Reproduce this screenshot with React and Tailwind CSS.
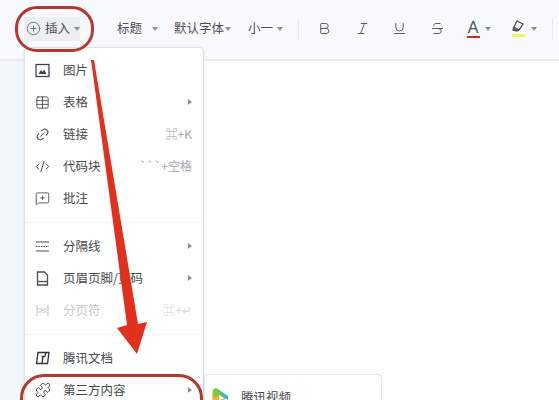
import React from "react";
import {
  Bold,
  CodeXml,
  Italic,
  Link2,
  MessageSquarePlus,
  PlusCircle,
  Puzzle,
  Strikethrough,
  Table,
  Underline,
} from "lucide-react";

const Caret = ({ className = "" }) => (
  <span className={`shrink-0 w-0 h-0 border-x-[3px] border-x-transparent border-t-[4px] border-t-[#8b9097] ${className}`} />
);

const Arrow = () => (
  <span className="w-0 h-0 border-y-[3px] border-y-transparent border-l-[4px] border-l-[#8b9097]" />
);

const PictureIcon = () => (
  <svg width="15" height="15" viewBox="0 0 15 15" fill="none" stroke="#3f4349" strokeWidth="1.3">
    <rect x="1" y="1.5" width="13" height="12" />
    <path d="M3.5 11l2.5-4 1.5 2 1.5-2.5 2.5 4.5z" fill="#3f4349" stroke="none" />
  </svg>
);

const PageIcon = () => (
  <svg width="15" height="15" viewBox="0 0 15 15" fill="none" stroke="#4b4f55" strokeWidth="1.3">
    <path d="M2.5 1h7l3 3v10h-10z" />
    <path d="M2.5 10.5h10" />
  </svg>
);

const DividerIcon = () => (
  <svg width="15" height="15" viewBox="0 0 15 15" fill="none" stroke="#4b4f55" strokeWidth="1.2">
    <path d="M1 3h13M1 12h13" />
    <path d="M1 7.5h13" strokeDasharray="1.5 1" />
  </svg>
);

const BreakIcon = () => (
  <svg width="15" height="15" viewBox="0 0 15 15" fill="none" stroke="#c9ccd0" strokeWidth="1.2">
    <path d="M2 2v4h11V2M2 13V9h11v4M1 7.5h2M6 7.5h3M12 7.5h2" />
  </svg>
);

const DocsIcon = () => (
  <svg width="16" height="16" viewBox="0 0 16 16" fill="none" stroke="#33373c" strokeWidth="1.4">
    <path d="M3 2.5h11l-1.5 11H1.5z" />
    <path d="M6.5 6.5h4M8 6.5L7 13.5M11 2.5l-1 3" />
  </svg>
);

const VideoLogo = () => (
  <svg width="18" height="20" viewBox="0 0 18 20">
    <path d="M2 3 L16 11 L3 19 Q0 11 2 3z" fill="#f7b52c" />
    <path d="M5 1 L17 9 L17 13 L8 7z" fill="#2bb5e8" />
    <path d="M2 3 Q3 1 5 1 L12 6 L3 11z" fill="#79c93c" />
    <path d="M8 8 L13 11 L8 14z" fill="#ffffff" />
  </svg>
);

const rows = [
  [
    { icon: <PictureIcon />, label: "图片" },
    { icon: <Table size={15} strokeWidth={1.4} />, label: "表格", more: true },
    { icon: <Link2 size={15} strokeWidth={1.6} className="-rotate-45" />, label: "链接", keys: "⌘+K" },
    { icon: <CodeXml size={15} strokeWidth={1.6} />, label: "代码块", keys: "```+空格" },
    { icon: <MessageSquarePlus size={15} strokeWidth={1.4} />, label: "批注" },
  ],
  [
    { icon: <DividerIcon />, label: "分隔线", more: true },
    { icon: <PageIcon />, label: "页眉页脚/页码", more: true },
    { icon: <BreakIcon />, label: "分页符", keys: "⌘+↵", off: true },
  ],
  [
    { icon: <DocsIcon />, label: "腾讯文档" },
    { icon: <Puzzle size={16} strokeWidth={1.5} />, label: "第三方内容", more: true },
  ],
];

const MenuRow = ({ row }) => (
  <div className={`h-8 flex items-center pl-[10px] pr-[11px] ${row.off ? "text-[#c4c7cb]" : "text-[#45494e]"}`}>
    <span className="w-[28px] flex items-center">{row.icon}</span>
    <span className="flex-1 text-[12.5px] whitespace-nowrap">{row.label}</span>
    {row.more && <Arrow />}
    {row.keys && (
      <span className={`text-[12px] ${row.off ? "text-[#d5d7da]" : "text-[#a4a7ab]"}`}>{row.keys}</span>
    )}
  </div>
);

const InsertMenu = () => (
  <div className="absolute left-[24px] top-[47px] w-[180px] h-[380px] bg-white border border-[#dfe2e6] rounded-sm py-[6px] shadow-sm">
    {rows.map((group, i) => (
      <div key={i}>
        {i > 0 && (
          <div className="h-4 flex items-center">
            <div className="w-full h-px bg-[#f1f2f4]" />
          </div>
        )}
        {group.map((row) => (
          <MenuRow key={row.label} row={row} />
        ))}
      </div>
    ))}
  </div>
);

const SubMenu = () => (
  <div className="absolute left-[204px] top-[374px] w-[178px] h-[60px] bg-white border border-[#e4e6e9] rounded-sm shadow-sm pt-[12px] pl-[6px] flex items-start gap-[12px]">
    <VideoLogo />
    <span className="text-[12.5px] leading-[20px] text-[#45494e]">腾讯视频</span>
  </div>
);

const Toolbar = () => (
  <div className="h-[61px] bg-[#f7f9fc] border-b-2 border-[#e8eaef] flex items-center pl-[24px] pb-[10px] pt-[8px] text-[12.5px] text-[#4d5157] whitespace-nowrap">
    <div className="shrink-0 w-[56px] h-[24px] bg-[#eceff2] flex items-center pl-[2px]">
      <PlusCircle size={15} strokeWidth={1.2} className="shrink-0 mr-[4px]" />
      <span>插入</span>
      <Caret className="ml-[4px]" />
    </div>
    <span className="ml-[37px]">标题</span>
    <Caret className="ml-[10px]" />
    <span className="ml-[16px]">默认字体</span>
    <Caret className="ml-[1px]" />
    <span className="ml-[17px]">小一</span>
    <Caret className="ml-[4px]" />
    <div className="ml-[15px] w-px h-[22px] bg-[#e6e8ec]" />
    <div className="ml-[18px] flex items-center text-[#4d5157]">
      <Bold size={15} strokeWidth={1.5} />
      <Italic size={15} strokeWidth={1.5} className="ml-[23px]" />
      <Underline size={15} strokeWidth={1.5} className="ml-[22px]" />
      <Strikethrough size={15} strokeWidth={1.5} className="ml-[23px]" />
      <div className="ml-[21px] w-[14px] flex flex-col items-center">
        <span className="text-[16px] leading-[15px] font-['Liberation_Sans',sans-serif]">A</span>
        <span className="w-[13px] h-[2px] bg-[#d42c20] mt-[1px]" />
      </div>
      <Caret className="ml-[5px]" />
      <div className="ml-[20px] w-[14px] flex flex-col items-center">
        <svg width="14" height="13" viewBox="0 0 14 13" fill="none" stroke="#4d5157" strokeWidth="1.3">
          <path d="M6 1l6 3-4 6-5-3z" />
          <path d="M3 7l-1 3 4 1 2-1" fill="#6a6e74" />
        </svg>
        <span className="w-[13px] h-[3px] bg-[#f5f25a] mt-[1px]" />
      </div>
      <Caret className="ml-[6px]" />
      <div className="ml-[15px] w-px h-[22px] bg-[#e6e8ec]" />
    </div>
  </div>
);

// red marks drawn over the screenshot
const Annotations = () => (
  <>
    <div className="absolute left-[15px] top-[6px] w-[79px] h-[46px] rounded-[22px] border-[3px] border-[#b8362c]" />
    <div className="absolute left-[20px] top-[374px] w-[183px] h-[50px] rounded-[24px] border-[3px] border-[#b8362c]" />
    <svg className="absolute left-0 top-0" width="559" height="400" viewBox="0 0 559 400">
      <path d="M91 60 L94 60 L138 324 L147 322 L137 354 L117 328 L127 325z" fill="#e2301c" />
    </svg>
  </>
);

export default function App() {
  return (
    <div className="relative w-[559px] h-[400px] overflow-hidden bg-white flex flex-col font-['Noto_Sans_CJK_SC','Noto_Sans',sans-serif]">
      <Toolbar />
      <div className="flex-1 flex">
        <div className="w-[24px] bg-[#f3f8fd]" />
        <div className="flex-1 bg-white" />
      </div>
      <InsertMenu />
      <SubMenu />
      <Annotations />
    </div>
  );
}
